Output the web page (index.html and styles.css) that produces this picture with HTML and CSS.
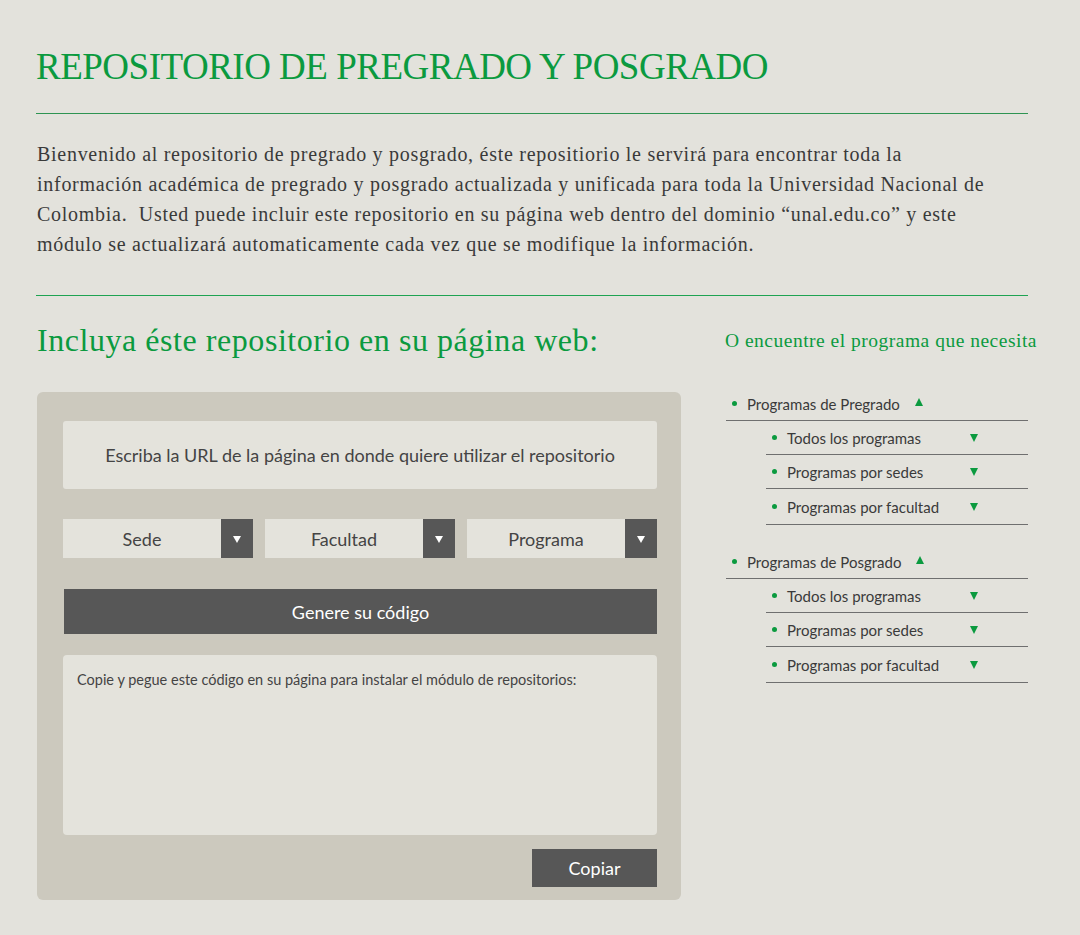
FILE: index.html
```html
<!DOCTYPE html>
<html lang="es">
<head>
<meta charset="utf-8">
<title>Repositorio de pregrado y posgrado</title>
<link rel="stylesheet" href="styles.css">
</head>
<body>
<div class="page">
  <h1 class="title">REPOSITORIO DE PREGRADO Y POSGRADO</h1>
  <div class="rule rule-top"></div>
  <p class="intro">Bienvenido al repositorio de pregrado y posgrado, éste repositiorio le servirá para encontrar toda la información académica de pregrado y posgrado actualizada y unificada para toda la Universidad Nacional de Colombia.&nbsp; Usted puede incluir este repositorio en su página web dentro del dominio “unal.edu.co” y este módulo se actualizará automaticamente cada vez que se modifique la información.</p>
  <div class="rule rule-bottom"></div>
  <div class="main">
    <section class="left">
      <h2 class="subtitle">Incluya éste repositorio en su página web:</h2>
      <div class="panel">
        <div class="url-box">Escriba la URL de la página en donde quiere utilizar el repositorio</div>
        <div class="selects">
          <div class="select"><span class="select-label">Sede</span><span class="select-arrow"><span class="arrow-down"></span></span></div>
          <div class="select"><span class="select-label">Facultad</span><span class="select-arrow"><span class="arrow-down"></span></span></div>
          <div class="select"><span class="select-label">Programa</span><span class="select-arrow"><span class="arrow-down"></span></span></div>
        </div>
        <div class="btn btn-generate">Genere su código</div>
        <div class="code-box">Copie y pegue este código en su página para instalar el módulo de repositorios:</div>
        <div class="copy-row"><div class="btn btn-copy">Copiar</div></div>
      </div>
    </section>
    <aside class="right">
      <h3 class="aside-title">O encuentre el programa que necesita</h3>
      <ul class="groups">
        <li class="group">
          <div class="group-head"><span class="dot"></span><span class="group-label">Programas de Pregrado</span><span class="tri tri-up"></span></div>
          <ul class="items">
            <li class="item"><span class="dot"></span><span class="item-label">Todos los programas</span><span class="tri tri-down"></span></li>
            <li class="item"><span class="dot"></span><span class="item-label">Programas por sedes</span><span class="tri tri-down"></span></li>
            <li class="item"><span class="dot"></span><span class="item-label">Programas por facultad</span><span class="tri tri-down"></span></li>
          </ul>
        </li>
        <li class="group">
          <div class="group-head"><span class="dot"></span><span class="group-label">Programas de Posgrado</span><span class="tri tri-up"></span></div>
          <ul class="items">
            <li class="item"><span class="dot"></span><span class="item-label">Todos los programas</span><span class="tri tri-down"></span></li>
            <li class="item"><span class="dot"></span><span class="item-label">Programas por sedes</span><span class="tri tri-down"></span></li>
            <li class="item"><span class="dot"></span><span class="item-label">Programas por facultad</span><span class="tri tri-down"></span></li>
          </ul>
        </li>
      </ul>
    </aside>
  </div>
</div>
</body>
</html>
```
FILE: styles.css
```css
* { box-sizing: border-box; }
html, body { margin: 0; padding: 0; }
body {
  background: #e3e2dc;
  font-family: "Liberation Serif", "DejaVu Serif", serif;
  color: #3a3a3a;
}
.page {
  padding: 44px 52px 30px 36px;
}
.title {
  margin: 0;
  font-weight: normal;
  font-size: 37px;
  line-height: 46px;
  color: #0b9a3f;
  letter-spacing: -0.5px;
}
.rule {
  height: 1px;
}
.rule-top { background: #2e9452; margin-top: 23px; }
.rule-bottom { background: #1ea352; }
.intro {
  margin: 25px 0 36px 1px;
  max-width: 965px;
  font-size: 20px;
  line-height: 30px;
  letter-spacing: 0.72px;
  color: #3a3a3a;
}
.main {
  display: grid;
  grid-template-columns: 644px 1fr;
  column-gap: 44px;
  margin-left: 1px;
  margin-right: -52px;
}
.subtitle {
  margin: 24px 0 0 0;
  font-weight: normal;
  font-size: 32px;
  line-height: 40px;
  letter-spacing: 0.55px;
  color: #0b9a3f;
}
.panel {
  margin-top: 32px;
  background: #ccc9be;
  border-radius: 6px;
  padding: 29px 24px 13px 26px;
  font-family: "Lato", "Open Sans", sans-serif;
}
.url-box {
  background: #e4e3dc;
  border-radius: 3px;
  height: 68px;
  display: flex;
  align-items: center;
  justify-content: center;
  font-size: 18px;
  color: #444;
}
.selects {
  margin-top: 30px;
  display: grid;
  grid-template-columns: 1fr 1fr 1fr;
  column-gap: 12px;
}
.select {
  display: flex;
  height: 39px;
  background: #e4e3dc;
}
.select-label {
  flex: 1;
  display: flex;
  align-items: center;
  justify-content: center;
  font-size: 18px;
  color: #444;
}
.select-arrow {
  width: 32px;
  background: #575757;
  display: flex;
  align-items: center;
  justify-content: center;
}
.arrow-down {
  width: 0;
  height: 0;
  border-left: 4px solid transparent;
  border-right: 4px solid transparent;
  border-top: 7px solid #fff;
  margin-top: 2px;
}
.btn {
  background: #575757;
  color: #fff;
  display: flex;
  align-items: center;
  justify-content: center;
  font-size: 18px;
}
.btn-generate {
  margin-top: 31px;
  height: 45px;
  margin-left: 1px;
}
.code-box {
  margin-top: 21px;
  background: #e4e3dc;
  border-radius: 4px;
  height: 180px;
  padding: 16px 14px;
  font-size: 14.5px;
  color: #444;
}
.copy-row {
  display: flex;
  justify-content: flex-end;
  margin-top: 14px;
}
.btn-copy {
  width: 125px;
  height: 38px;
}
.aside-title {
  margin: 33px 0 0 0;
  font-weight: normal;
  font-size: 19.5px;
  line-height: 24px;
  letter-spacing: 0.5px;
  color: #0b9a3f;
}
.groups, .items {
  list-style: none;
  margin: 0;
  padding: 0;
}
.groups {
  margin-top: 37px;
  margin-left: 1px;
  width: 302px;
  font-family: "Lato", "Open Sans", sans-serif;
  font-size: 15px;
  color: #3a3a3a;
}
.group + .group { margin-top: 23px; }
.group-head {
  display: flex;
  align-items: center;
  height: 31px;
  border-bottom: 1px solid #6f6f6f;
  padding-left: 6px;
  padding-bottom: 3px;
}
.items { margin-left: 40px; }
.item {
  display: flex;
  align-items: center;
  height: 34px;
  border-bottom: 1px solid #6f6f6f;
  padding-left: 6px;
}
.item:last-child { height: 36px; }
.dot {
  width: 5px;
  height: 5px;
  border-radius: 50%;
  background: #0b9a3f;
  margin-right: 10px;
  flex: none;
}
.item-label { width: 183px; }
.tri {
  width: 0;
  height: 0;
  border-left: 4px solid transparent;
  border-right: 4px solid transparent;
  flex: none;
}
.tri-up {
  border-bottom: 8px solid #0b9a3f;
  margin-left: 15px;
  margin-top: -3px;
}
.tri-down {
  border-top: 8px solid #0b9a3f;
}
```
